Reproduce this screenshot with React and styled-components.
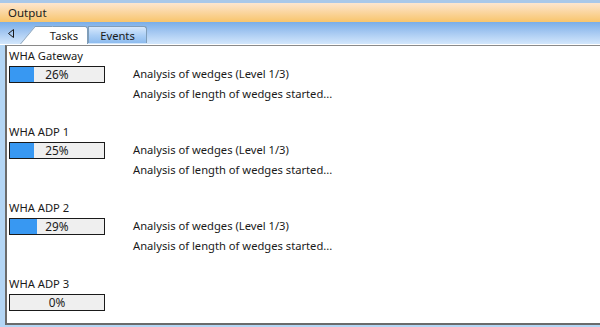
import React from 'react';
import styled, { createGlobalStyle } from 'styled-components';

const Global = createGlobalStyle`
  html, body { margin: 0; padding: 0; }
  body {
    width: 600px;
    height: 327px;
    overflow: hidden;
    font-family: "Noto Sans", "Open Sans", sans-serif;
    font-size: 11.2px;
    color: #1a1a1a;
  }
`;

const Window = styled.div`
  width: 600px;
  height: 327px;
  display: flex;
  flex-direction: column;
  background: #b4d6f5;
`;

const TopEdge = styled.div`
  height: 3px;
  background: #a9c8e9;
`;

const TitleBar = styled.div`
  height: 19px;
  display: flex;
  align-items: center;
  padding-left: 8px;
  background: linear-gradient(#fde6cf 0%, #fbd7a3 45%, #f8c56c 100%);
  color: #1b1b1b;
  font-size: 11.5px;
`;

const TabStrip = styled.div`
  height: 22px;
  display: flex;
  align-items: flex-end;
  background: linear-gradient(#7aaee8 0%, #a8caf2 50%, #d3e7fc 100%);
  border-bottom: 1px solid #ffffff;
`;

const ArrowBtn = styled.div`
  width: 20px;
  height: 22px;
  display: flex;
  align-items: center;
  justify-content: center;
  padding-left: 2px;
  box-sizing: border-box;
`;

const Tab = styled.div`
  position: relative;
  height: ${p => (p.$active ? '18px' : '17px')};
  margin-bottom: ${p => (p.$active ? '0' : '1px')};
  width: ${p => p.$w}px;
  margin-left: ${p => p.$ml || 0}px;
  display: flex;
  align-items: center;
  justify-content: center;
  box-sizing: border-box;
  border: 1px solid #7f9db9;
  border-bottom: none;
  border-left: ${p => (p.$active ? 'none' : '1px solid #7f9db9')};
  border-radius: 0 3px 0 0;
  background: ${p =>
    p.$active ? '#ffffff' : 'linear-gradient(#d6e8fc 0%, #a9cdf5 55%, #8dbbee 100%)'};
  color: #1a1a1a;
  z-index: ${p => (p.$active ? 2 : 1)};
  padding-left: ${p => (p.$active ? '6px' : '0')};

  &::before {
    content: ${p => (p.$active ? "''" : 'none')};
    position: absolute;
    left: -15px;
    top: -1px;
    bottom: 0;
    width: 17px;
    background: #ffffff;
    border-left: 1px solid #7f9db9;
    border-top: 1px solid #7f9db9;
    transform: skewX(-40deg);
    transform-origin: bottom left;
    z-index: -1;
  }
`;

const Body = styled.div`
  flex: 1;
  display: flex;
  padding: 0 0 2px 5px;
  min-height: 0;
`;

const Content = styled.div`
  flex: 1;
  background: #ffffff;
  border-left: 2px solid #6b6b6b;
  border-top: 1px solid #8a8a8a;
  border-bottom: 2px solid #6b6b6b;
  padding: 2px 0 0 2px;
  overflow: hidden;
`;

const Group = styled.div`
  height: 76px;
  display: flex;
  flex-direction: column;
`;

const TaskName = styled.div`
  height: 16px;
  line-height: 16px;
`;

const TaskRow = styled.div`
  display: flex;
`;

const BarCol = styled.div`
  width: 124px;
  padding-top: 2px;
`;

const Bar = styled.div`
  position: relative;
  width: 96px;
  height: 17px;
  box-sizing: border-box;
  border: 1px solid #1a1a1a;
  background: #efefef;
  display: flex;
  align-items: center;
  justify-content: center;
  font-size: 11.8px;
`;

const BarFill = styled.div`
  position: absolute;
  left: 0;
  top: 0;
  bottom: 0;
  background: #3898f2;
`;

const BarText = styled.span`
  position: relative;
  line-height: 15px;
`;

const Messages = styled.div`
  display: flex;
  flex-direction: column;
`;

const Message = styled.div`
  height: 20px;
  line-height: 20px;
`;

const tasks = [
  { name: 'WHA Gateway', pct: 26, msgs: true },
  { name: 'WHA ADP 1', pct: 25, msgs: true },
  { name: 'WHA ADP 2', pct: 29, msgs: true },
  { name: 'WHA ADP 3', pct: 0, msgs: false },
];

const App = () => (
  <>
    <Global />
    <Window>
      <TopEdge />
      <TitleBar>Output</TitleBar>
      <TabStrip>
        <ArrowBtn>
          <svg width="6" height="9" viewBox="0 0 6 9">
            <polygon points="5.5,0.5 5.5,8.5 0.5,4.5" fill="none" stroke="#1a1a1a" strokeWidth="1" />
          </svg>
        </ArrowBtn>
        <Tab $active $w={53} $ml={15}>Tasks</Tab>
        <Tab $w={59}>Events</Tab>
      </TabStrip>
      <Body>
        <Content>
          {tasks.map(t => (
            <Group key={t.name}>
              <TaskName>{t.name}</TaskName>
              <TaskRow>
                <BarCol>
                  <Bar>
                    <BarFill style={{ width: `${t.pct}%` }} />
                    <BarText>{t.pct}%</BarText>
                  </Bar>
                </BarCol>
                {t.msgs && (
                  <Messages>
                    <Message>Analysis of wedges (Level 1/3)</Message>
                    <Message>Analysis of length of wedges started...</Message>
                  </Messages>
                )}
              </TaskRow>
            </Group>
          ))}
        </Content>
      </Body>
    </Window>
  </>
);

export default App;
